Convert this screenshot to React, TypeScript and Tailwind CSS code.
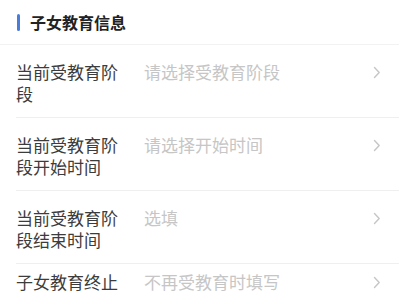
import React from 'react'

const rows = [
  { label: '当前受教育阶段', placeholder: '请选择受教育阶段', pt: 'pt-[16px]' },
  { label: '当前受教育阶段开始时间', placeholder: '请选择开始时间', pt: 'pt-[16px]' },
  { label: '当前受教育阶段结束时间', placeholder: '选填', pt: 'pt-[16px]' },
  { label: '子女教育终止', placeholder: '不再受教育时填写', pt: 'pt-[7px]' },
]

function Chevron() {
  return (
    <svg width="8" height="13" viewBox="0 0 8 13" fill="none" className="shrink-0">
      <path d="M1.5 1.5 L6.2 6.5 L1.5 11.5" stroke="#c6c6c6" strokeWidth="1.4" strokeLinecap="round" strokeLinejoin="round" />
    </svg>
  )
}

export default function App() {
  return (
    <div
      className="w-[399px] h-[299px] overflow-hidden bg-white"
      style={{ fontFamily: '"Noto Sans CJK SC", "Noto Sans", sans-serif' }}
    >
      <div className="h-[45px] flex items-center pl-[17px] border-b border-[#f2f2f2]">
        <div className="w-[3px] h-[17px] rounded-full bg-[#4a7cdc]" />
        <div className="ml-[10px] text-[16px] font-bold text-[#222222] leading-none">子女教育信息</div>
      </div>
      <div className="ml-[16px]">
        {rows.map((r) => (
          <div key={r.label} className={`flex items-start ${r.pt} pb-[12px] pr-[18px] border-b border-[#efefef]`}>
            <div className="w-[104px] shrink-0 text-[17px] leading-[22px] text-[#3c3c3c]">{r.label}</div>
            <div className="ml-[24px] flex-1 text-[17px] leading-[22px] text-[#c6c6c6]">{r.placeholder}</div>
            <div className="h-[22px] flex items-center">
              <Chevron />
            </div>
          </div>
        ))}
      </div>
    </div>
  )
}
